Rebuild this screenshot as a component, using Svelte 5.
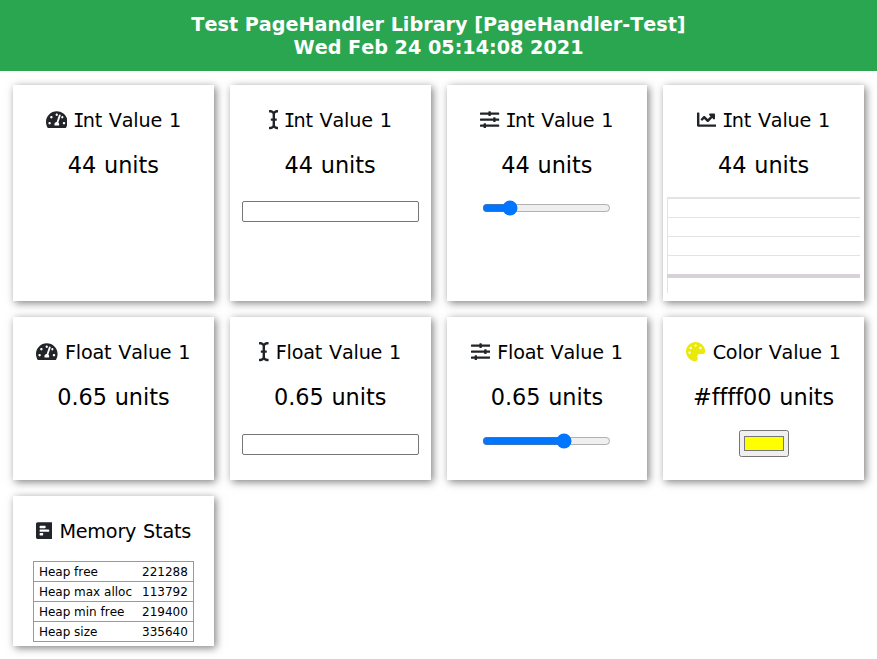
<script>
  const icons = {
    gauge: { w: 576, d: 'M288 32C128.94 32 0 160.94 0 320c0 52.8 14.25 102.26 39.06 144.8 5.61 9.62 16.3 15.2 27.44 15.2h443c11.14 0 21.83-5.58 27.44-15.2C561.75 422.26 576 372.8 576 320c0-159.06-128.94-288-288-288zm0 64c14.71 0 26.58 10.13 30.32 23.65-1.11 2.26-2.64 4.23-3.45 6.67l-9.22 27.67c-5.13 3.49-10.97 6.01-17.64 6.01-17.67 0-32-14.33-32-32S270.33 96 288 96zM96 384c-17.67 0-32-14.33-32-32s14.33-32 32-32 32 14.33 32 32-14.33 32-32 32zm48-160c-17.67 0-32-14.33-32-32s14.33-32 32-32 32 14.33 32 32-14.33 32-32 32zm246.77-72.41l-61.33 184C343.13 347.33 352 364.54 352 384c0 11.72-3.38 22.55-8.88 32H232.88c-5.5-9.45-8.88-20.28-8.88-32 0-33.94 26.5-61.43 59.9-63.59l61.34-184.01c4.17-12.56 17.73-19.45 30.36-15.17 12.57 4.19 19.35 17.79 15.17 30.36zm14.66 57.2l15.52-46.55c3.47-1.29 7.13-2.23 11.05-2.23 17.67 0 32 14.33 32 32s-14.33 32-32 32c-11.38-.01-20.89-6.28-26.57-15.22zM480 384c-17.67 0-32-14.33-32-32s14.33-32 32-32 32 14.33 32 32-14.33 32-32 32z' },
    cursor: { w: 256, d: 'M256 52.048V12.065C256 5.496 250.726.148 244.158.019 211.621-.621 166.469.011 128 37.959 90.266.736 46.979-.114 11.913.114 5.318.157 0 5.519 0 12.114v39.645c0 6.687 5.458 12.078 12.145 11.998C38.111 63.447 96 67.243 96 112.182V224H60c-6.627 0-12 5.373-12 12v40c0 6.627 5.373 12 12 12h36v112c0 44.932-56.075 48.031-83.95 47.959C5.404 447.942 0 453.306 0 459.952v39.983c0 6.569 5.274 11.917 11.842 12.046 32.537.64 77.689.008 116.158-37.94 37.734 37.223 81.021 38.073 116.087 37.845 6.595-.043 11.913-5.405 11.913-12V460.24c0-6.687-5.458-12.078-12.145-11.998C217.889 448.553 160 444.939 160 400V288h36c6.627 0 12-5.373 12-12v-40c0-6.627-5.373-12-12-12h-36V112.182c0-44.932 56.075-48.213 83.95-48.142 6.646.018 12.05-5.346 12.05-11.992z' },
    sliders: { w: 512, d: 'M496 384H160v-16c0-8.8-7.2-16-16-16h-32c-8.8 0-16 7.2-16 16v16H16c-8.8 0-16 7.2-16 16v32c0 8.8 7.2 16 16 16h80v16c0 8.8 7.2 16 16 16h32c8.8 0 16-7.2 16-16v-16h336c8.8 0 16-7.2 16-16v-32c0-8.8-7.2-16-16-16zm0-160h-80v-16c0-8.8-7.2-16-16-16h-32c-8.8 0-16 7.2-16 16v16H16c-8.8 0-16 7.2-16 16v32c0 8.8 7.2 16 16 16h336v16c0 8.8 7.2 16 16 16h32c8.8 0 16-7.2 16-16v-16h80c8.8 0 16-7.2 16-16v-32c0-8.8-7.2-16-16-16zm0-160H288V48c0-8.8-7.2-16-16-16h-32c-8.8 0-16 7.2-16 16v16H16C7.2 64 0 71.2 0 80v32c0 8.8 7.2 16 16 16h208v16c0 8.8 7.2 16 16 16h32c8.8 0 16-7.2 16-16v-16h208c8.8 0 16-7.2 16-16V80c0-8.8-7.2-16-16-16z' },
    chart: { w: 512, d: 'M496 384H64V80c0-8.84-7.16-16-16-16H16C7.16 64 0 71.16 0 80v336c0 17.67 14.33 32 32 32h464c8.84 0 16-7.16 16-16v-32c0-8.84-7.16-16-16-16zM464 96H345.94c-21.38 0-32.09 25.85-16.97 40.97l32.4 32.4L288 242.75l-73.37-73.37c-12.5-12.5-32.76-12.5-45.25 0l-68.69 68.69c-6.25 6.25-6.25 16.38 0 22.63l22.62 22.62c6.25 6.25 16.38 6.25 22.63 0L192 237.25l73.37 73.37c12.5 12.5 32.76 12.5 45.25 0l96-96 32.4 32.4c15.12 15.12 40.97 4.41 40.97-16.97V112c.01-8.84-7.15-16-15.99-16z' },
    palette: { w: 512, d: 'M204.3 5C104.9 24.4 24.8 104.3 5.2 203.4c-37 187 131.7 326.4 258.8 306.7 41.2-6.4 61.4-54.6 42.5-91.7-23.1-45.4 9.9-98.4 60.9-98.4h79.7c35.8 0 64.8-29.6 64.9-65.3C511.5 97.1 368.1-26.9 204.3 5zM96 320c-17.7 0-32-14.3-32-32s14.3-32 32-32 32 14.3 32 32-14.3 32-32 32zm32-128c-17.7 0-32-14.3-32-32s14.3-32 32-32 32 14.3 32 32-14.3 32-32 32zm128-64c-17.7 0-32-14.3-32-32s14.3-32 32-32 32 14.3 32 32-14.3 32-32 32zm128 64c-17.7 0-32-14.3-32-32s14.3-32 32-32 32 14.3 32 32-14.3 32-32 32z' },
    stats: { w: 448, d: 'M448 432V80c0-26.5-21.5-48-48-48H48C21.5 32 0 53.5 0 80v352c0 26.5 21.5 48 48 48h352c26.5 0 48-21.5 48-48zM112 192c-8.84 0-16-7.16-16-16v-32c0-8.84 7.16-16 16-16h128c8.84 0 16 7.16 16 16v32c0 8.84-7.16 16-16 16H112zm0 96c-8.84 0-16-7.16-16-16v-32c0-8.84 7.16-16 16-16h224c8.84 0 16 7.16 16 16v32c0 8.84-7.16 16-16 16H112zm0 96c-8.84 0-16-7.16-16-16v-32c0-8.84 7.16-16 16-16h64c8.84 0 16 7.16 16 16v32c0 8.84-7.16 16-16 16h-64z' }
  };

  const cards = [
    { icon: 'gauge', title: 'Int Value 1', value: '44' },
    { icon: 'cursor', title: 'Int Value 1', value: '44', control: 'text' },
    { icon: 'sliders', title: 'Int Value 1', value: '44', control: 'range', max: 255 },
    { icon: 'chart', title: 'Int Value 1', value: '44', control: 'chart' },
    { icon: 'gauge', title: 'Float Value 1', value: '0.65' },
    { icon: 'cursor', title: 'Float Value 1', value: '0.65', control: 'text', float: true },
    { icon: 'sliders', title: 'Float Value 1', value: '0.65', control: 'range', max: 1, float: true },
    { icon: 'palette', title: 'Color Value 1', value: '#ffff00', control: 'color' },
    { icon: 'stats', title: 'Memory Stats', control: 'table' }
  ];

  const memory = [
    ['Heap free', '221288'],
    ['Heap max alloc', '113792'],
    ['Heap min free', '219400'],
    ['Heap size', '335640']
  ];
</script>

<header>
  <h1>Test PageHandler Library [PageHandler-Test]<br />Wed Feb 24 05:14:08 2021</h1>
</header>

<main>
  {#each cards as card}
    <section class="card">
      <h2>
        <svg class="icon {card.icon}" viewBox="0 0 {icons[card.icon].w} 512" style="width:{icons[card.icon].w / 512}em"><path d={icons[card.icon].d} /></svg>
        <span class="label">{#if card.title[0] === 'I'}<span class="cap">I</span>{card.title.slice(1)}{:else}{card.title}{/if}</span>
      </h2>
      {#if card.value}<p class="value">{card.value} units</p>{/if}

      {#if card.control === 'text'}
        <div class="control text" class:float={card.float}><input type="text" /></div>
      {:else if card.control === 'range'}
        <div class="control range" class:float={card.float}><input type="range" min="0" max={card.max} step="any" value={card.value} /></div>
      {:else if card.control === 'color'}
        <div class="control color"><input type="color" value={card.value} /></div>
      {:else if card.control === 'chart'}
        <svg class="plot" width="193" height="96" viewBox="0 0 193 96">
          <path fill="#e3e3e3" d="M0 0h193v2H0zM0 20h193v1H0zM0 39h193v1H0zM0 58h193v1H0zM0 0h1v96H0z" />
          <path fill="#d8d1da" d="M0 77h193v4H0z" />
        </svg>
      {:else if card.control === 'table'}
        <table>
          <tbody>
            {#each memory as [name, bytes]}
              <tr><td>{name}</td><td class="num">{bytes}</td></tr>
            {/each}
          </tbody>
        </table>
      {/if}
    </section>
  {/each}
</main>

<style>
  :global(body) {
    background: #fff;
    font-family: Verdana, 'DejaVu Sans', sans-serif;
    color: #000;
    font-kerning: none;
  }
  header {
    box-sizing: border-box;
    height: 71px;
    padding-top: 13px;
    background: #2aa651;
    color: #fff;
    text-align: center;
  }
  h1 {
    margin: 0;
    font-size: 19.2px;
    line-height: 23.3px;
    font-weight: bold;
  }
  main {
    display: grid;
    grid-template-columns: repeat(4, 1fr);
    grid-template-rows: 216px 163px 150px;
    gap: 16px;
    padding: 14px 13px 13px;
  }
  .card {
    display: flex;
    flex-direction: column;
    align-items: center;
    background: #fff;
    box-shadow: 2px 2px 8px rgba(0, 0, 0, 0.5);
  }
  h2 {
    display: flex;
    align-items: center;
    gap: 7px;
    height: 24px;
    margin: 23px 0 0;
    font-size: 19.2px;
    font-weight: normal;
    line-height: 24px;
    white-space: nowrap;
    letter-spacing: -0.01em;
    word-spacing: 0.05em;
  }
  .label {
    padding-top: 2px;
  }
  .icon {
    height: 1em;
    fill: #212428;
  }
  .palette {
    fill: #eaea0a;
  }
  .cap {
    font-family: 'DejaVu Sans Mono', monospace;
    margin: 0 -1.7px 0 -1.4px;
    line-height: 1;
  }
  .value {
    margin: 19px 0 0;
    font-size: 22.4px;
    line-height: 28px;
    white-space: nowrap;
    letter-spacing: -0.002em;
    word-spacing: 0.034em;
  }
  .control {
    display: flex;
  }
  .text {
    margin-top: 22px;
  }
  .text input {
    box-sizing: border-box;
    width: 177px;
    height: 21px;
    margin: 0;
    border: 1px solid #767676;
    border-radius: 2px;
  }
  .range {
    margin-top: 21px;
  }
  .range input {
    width: 129px;
    height: 16px;
    margin: 0;
  }
  .text.float {
    margin-top: 23px;
  }
  .range.float {
    margin-top: 22px;
  }
  .color {
    margin-top: 19px;
  }
  .color input {
    width: 50px;
    height: 27px;
    margin: 0;
  }
  .plot {
    display: block;
    margin-top: 18px;
  }
  table {
    width: 161px;
    margin-top: 18px;
    border-collapse: collapse;
    font-size: 12px;
    line-height: 15px;
  }
  tr {
    border: 1px solid #999;
  }
  td {
    height: 15px;
    padding: 3px 5px 1px;
    white-space: nowrap;
  }
  .num {
    text-align: right;
  }
</style>
